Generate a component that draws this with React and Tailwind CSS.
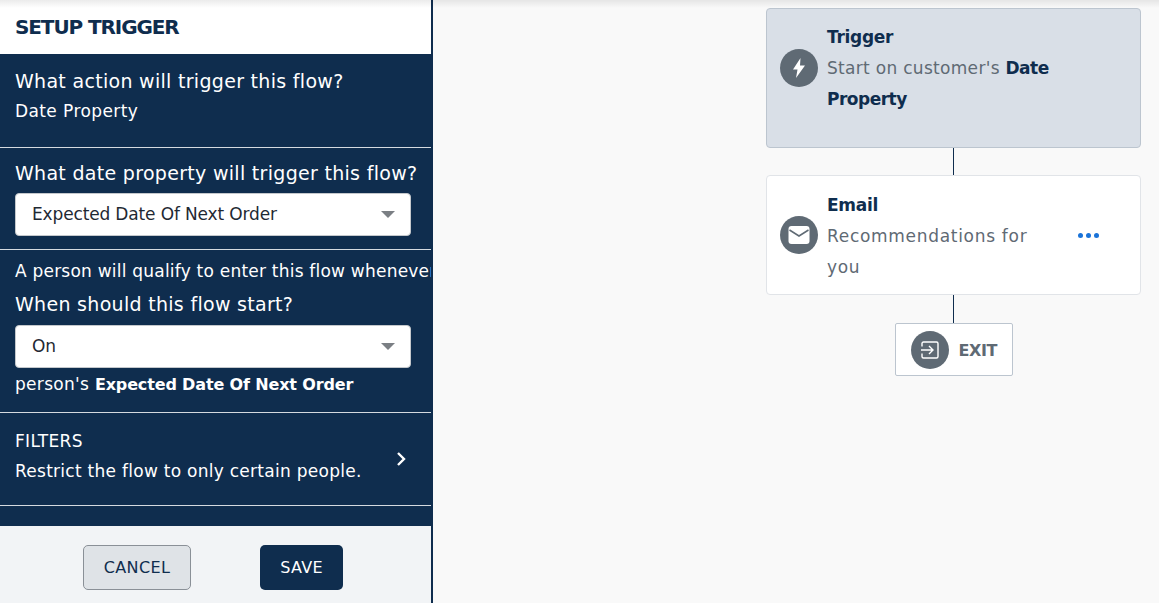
import React from 'react';

const font = 'font-["DejaVu_Sans",sans-serif]';

const SelectBox = ({ value }) => (
  <div className="flex h-[43px] w-[396px] items-center justify-between rounded-[4px] border border-[#c4c8cc] bg-white pl-[16px] pr-[15px] text-[17px] tracking-[-0.15px] text-[#1f2933]">
    <span>{value}</span>
    <svg width="14" height="7" viewBox="0 0 14 7"><path d="M0 0h14L7 7z" fill="#7b7f84" /></svg>
  </div>
);

const IconCircle = ({ size = 38, children }) => (
  <div className="flex shrink-0 items-center justify-center rounded-full bg-[#5f6a74]" style={{ width: size, height: size }}>
    {children}
  </div>
);

const Connector = ({ h }) => <div className="w-px bg-[#0f2d4e]" style={{ height: h }}></div>;

const Strong = ({ children }) => <b className="font-bold tracking-[-0.5px] text-[#0f2d4e]">{children}</b>;

export default function App() {
  return (
    <div className={`relative flex h-[603px] w-[1159px] overflow-hidden bg-[#f9f9f9] ${font}`}>
      <div className="pointer-events-none absolute inset-x-0 top-0 z-10 h-[8px] bg-gradient-to-b from-[#00000014] to-transparent"></div>

      {/* left panel */}
      <div className="flex h-full w-[433px] shrink-0 flex-col border-r-2 border-[#0f2d4e] bg-white">
        <div className="flex h-[54px] items-center px-[15px] text-[20px] font-bold tracking-[-1.1px] text-[#0f2d4e]">SETUP TRIGGER</div>

        <div className="flex h-[472px] flex-col bg-[#0f2d4e] text-white">
          <div className="h-[94px] border-b border-[#d5dae0] px-[15px] pt-[15px]">
            <div className="text-[19px] leading-[24px] tracking-[0.3px]">What action will trigger this flow?</div>
            <div className="mt-[6px] text-[17px] leading-[24px] tracking-[0.4px]">Date Property</div>
          </div>

          <div className="h-[102px] border-b border-[#d5dae0] px-[15px] pt-[13px]">
            <div className="mb-[7px] whitespace-nowrap text-[19px] leading-[25px] tracking-[0.3px]">What date property will trigger this flow?</div>
            <SelectBox value="Expected Date Of Next Order" />
          </div>

          <div className="h-[163px] overflow-hidden border-b border-[#d5dae0] pl-[15px] pt-[9px]">
            <div className="whitespace-nowrap text-[17px] leading-[24px] tracking-[0.22px]">A person will qualify to enter this flow whenever</div>
            <div className="mt-[9px] text-[19px] leading-[25px] tracking-[0.3px]">When should this flow start?</div>
            <div className="mt-[8px]"><SelectBox value="On" /></div>
            <div className="mt-[4px] text-[17px] leading-[24px] tracking-[0.3px]">person's <b className="text-[16px] font-bold tracking-[-0.15px]">Expected Date Of Next Order</b></div>
          </div>

          <div className="flex h-[93px] items-center justify-between border-b border-[#d5dae0] pl-[15px] pr-[24px]">
            <div className="pb-[6px]">
              <div className="text-[17px] leading-[24px] tracking-[0.3px]">FILTERS</div>
              <div className="mt-[6px] text-[17px] leading-[24px] tracking-[0.27px]">Restrict the flow to only certain people.</div>
            </div>
            <svg width="12" height="16" viewBox="0 0 12 16" fill="none"><path d="M3 2l6 6-6 6" stroke="#fff" strokeWidth="2.4" /></svg>
          </div>
        </div>

        <div className="flex flex-1 items-center gap-[69px] bg-[#f2f4f6] pl-[83px] pt-[6px]">
          <button className="h-[45px] w-[108px] rounded-[5px] border border-[#8a9097] bg-[#dfe3e7] text-[16px] tracking-[0.4px] text-[#0f2d4e]">CANCEL</button>
          <button className="h-[45px] w-[83px] rounded-[5px] bg-[#0f2d4e] text-[16px] tracking-[0.3px] text-white">SAVE</button>
        </div>
      </div>

      {/* flow canvas */}
      <div className="flex-1 pl-[333px] pt-[8px]">
        <div className="flex w-[375px] flex-col items-center">
          <div className="flex h-[140px] w-full items-center gap-[9px] rounded-[4px] border border-[#bcc5cf] bg-[#d9dfe7] pb-[20px] pl-[13px]">
            <IconCircle>
              <svg width="14" height="20" viewBox="0 0 14 20"><path d="M8.500 0L1 11.500h4.500L4 20l9-12.500H8z" fill="#fff" /></svg>
            </IconCircle>
            <div className="w-[270px] text-[17px] leading-[31px] tracking-[0.3px] text-[#5f6a74]">
              <div className="font-bold tracking-[-0.3px] text-[#0f2d4e]">Trigger</div>
              Start on customer's <Strong>Date</Strong> <Strong>Property</Strong>
            </div>
          </div>
          <Connector h={27} />
          <div className="flex h-[120px] w-full items-center rounded-[4px] border border-[#e1e4e8] bg-white pl-[13px] pr-[41px]">
            <IconCircle>
              <svg width="24" height="22" viewBox="0 0 24 22">
                <rect x="1.500" y="2" width="21" height="18" rx="3" fill="#fff" />
                <path d="M2.500 6l9.500 6 9.500-6" fill="none" stroke="#5f6a74" strokeWidth="1.500" />
              </svg>
            </IconCircle>
            <div className="ml-[9px] w-[210px] pt-[3px] text-[17px] leading-[31px] tracking-[0.7px] text-[#5f6a74]">
              <div className="font-bold tracking-[-0.3px] text-[#0f2d4e]">Email</div>
              Recommendations for you
            </div>
            <div className="ml-auto flex gap-[3px]">
              <span className="h-[5px] w-[5px] rounded-full bg-[#1a73d9]"></span>
              <span className="h-[5px] w-[5px] rounded-full bg-[#1a73d9]"></span>
              <span className="h-[5px] w-[5px] rounded-full bg-[#1a73d9]"></span>
            </div>
          </div>
          <Connector h={28} />
          <div className="flex h-[53px] w-[118px] items-center gap-[10px] rounded-[2px] border border-[#bcc5cf] bg-white pl-[15px]">
            <IconCircle>
              <svg width="24" height="24" viewBox="0 0 24 24" fill="none" stroke="#fff" strokeWidth="1.400">
                <path d="M4 8.500V5.500A1.500 1.500 0 0 1 5.500 4h13A1.500 1.500 0 0 1 20 5.500v13a1.500 1.500 0 0 1-1.500 1.500h-13A1.500 1.500 0 0 1 4 18.500v-3" />
                <path d="M3 12h12M11 8l4 4-4 4" />
              </svg>
            </IconCircle>
            <span className="pt-[2px] text-[16px] font-bold tracking-[-0.4px] text-[#5f6a74]">EXIT</span>
          </div>
        </div>
      </div>
    </div>
  );
}
